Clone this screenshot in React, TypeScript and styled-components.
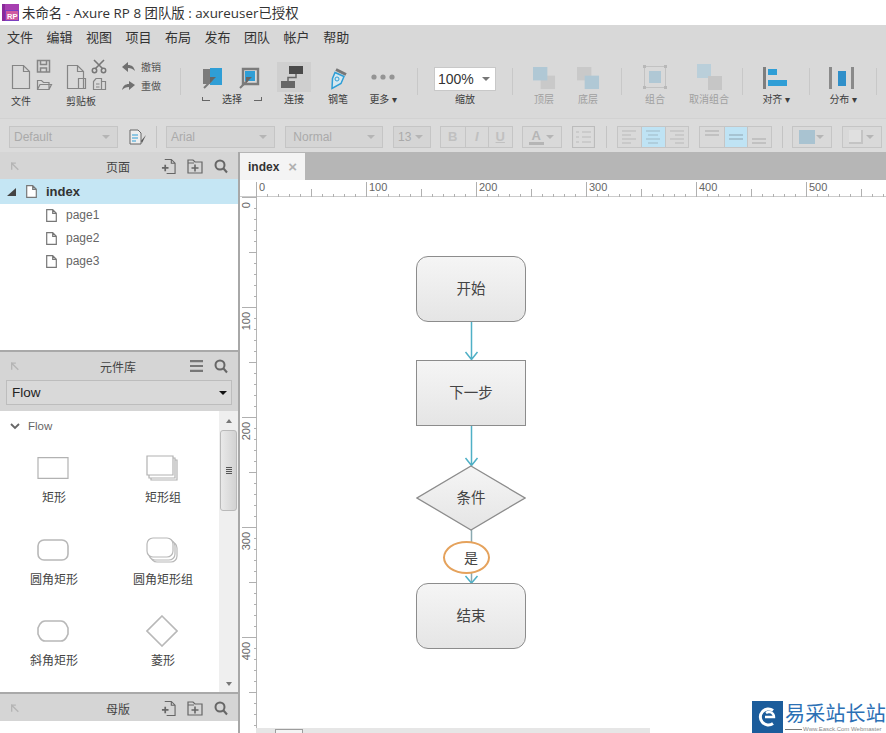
import React from "react";
import styled, { createGlobalStyle } from "styled-components";

const CJK = `"Noto Sans CJK SC", sans-serif`;
const UI = `"Open Sans", "Noto Sans CJK SC", sans-serif`;
const ARIAL = `"Liberation Sans", "Noto Sans CJK SC", sans-serif`;

const Global = createGlobalStyle`
  html, body { margin: 0; padding: 0; background: #fff; overflow: hidden; }
  #root { width: 886px; height: 733px; overflow: hidden; position: relative; }
  * { box-sizing: border-box; }
`;

const Page = styled.div`
  width: 886px; height: 733px; display: flex; flex-direction: column; font-family: ${ARIAL}; position: relative; overflow: hidden;
`;
const TitleBar = styled.div`
  height: 25px; flex: none; display: flex; align-items: center; gap: 3px; padding: 0 0 1px 2px; background: #fff;
`;
const TitleText = styled.span`
  font: 13.4px ${UI}; color: #333; white-space: nowrap;
`;
const MenuBar = styled.div`
  height: 25px; flex: none; display: flex; align-items: center; gap: 13.5px; padding: 0 0 2px 7px; background: #d8d8d8;
`;
const MenuItem = styled.span`
  font: 13px ${CJK}; color: #333; white-space: nowrap;
`;
const Toolbar = styled.div`
  height: 68px; flex: none; display: flex; background: #d9d9d9; overflow: hidden;
`;
const Tool = styled.div<{ $w: number; $left?: number; $ml?: number; $dim?: boolean; $start?: boolean }>`
  width: ${p => p.$w}px; flex: none; margin-left: ${p => p.$ml || 0}px; padding-left: ${p => p.$left || 0}px;
  display: flex; flex-direction: column; align-items: ${p => (p.$start ? "flex-start" : "center")};
  color: ${p => (p.$dim ? "#a0a0a0" : "#3d3d3d")};
`;
const ToolIcon = styled.div<{ $top?: number }>`
  height: 42px; display: flex; align-items: flex-start; justify-content: center;
  svg { display: block; margin-top: ${p => p.$top ?? 17}px; overflow: visible; }
`;
const SelectPair = styled(ToolIcon)`
  padding-left: 2px; gap: 17px;
`;
const HoverBox = styled.div`
  width: 34px; height: 30px; margin-top: 12px; background: #cfcfcf; display: flex; align-items: center; justify-content: center;
`;
const ToolLabel = styled.span`
  font: 10px/14px ${CJK}; white-space: nowrap; margin-top: 0;
`;
const LowLabel = styled(ToolLabel)`
  margin-top: 2px;
`;
const UndoStack = styled.div`
  width: 64px; flex: none; padding: 10px 0 0 6px; display: flex; flex-direction: column; gap: 6px;
`;
const UndoRow = styled.div`
  display: flex; align-items: center; gap: 6px; height: 13px; font: 10px ${CJK}; color: #555; white-space: nowrap;
`;
const ToolSep = styled.div<{ $ml?: number }>`
  width: 1px; height: 27px; flex: none; margin: 18px 0 0 ${p => p.$ml || 0}px; background: #c8c8c8;
`;
const SelectLabel = styled.div`
  width: 60px; margin-left: 1px; display: flex; justify-content: space-between; align-items: center;
  font: 10px/14px ${CJK}; color: #3d3d3d;
`;
const Corner = styled.span<{ $right?: boolean }>`
  width: 8px; height: 4px; border-bottom: 1px solid #666;
  border-left: ${p => (p.$right ? "none" : "1px solid #666")};
  border-right: ${p => (p.$right ? "1px solid #666" : "none")};
`;
const ZoomBox = styled.div`
  width: 62px; height: 24px; margin-top: 17px; margin-bottom: 1px; background: #fff; border: 1px solid #c8c8c8;
  display: flex; align-items: center; justify-content: space-between; padding: 0 5px 0 3px;
  font: 14px ${ARIAL}; color: #333;
`;
const Caret = styled.i<{ $c?: string; $s?: number }>`
  display: block; width: 0; height: 0; flex: none;
  border-left: ${p => p.$s || 4}px solid transparent; border-right: ${p => p.$s || 4}px solid transparent;
  border-top: ${p => p.$s || 4}px solid ${p => p.$c || "#777"};
`;
const FormatBar = styled.div`
  height: 34px; flex: none; display: flex; align-items: center; padding: 2px 0 0 9px; background: #dbdbdb;
  border-top: 1px solid #d2d2d2;
`;
const FSelect = styled.div<{ $w: number; $ml?: number }>`
  width: ${p => p.$w}px; height: 22px; flex: none; margin-left: ${p => p.$ml || 0}px; background: #d5d5d5; border: 1px solid #c5c5c5;
  display: flex; align-items: center; justify-content: space-between; padding: 0 7px 0 4px;
  font: 12px ${ARIAL}; color: #aaa;
`;
const FSep = styled.div<{ $ml: number }>`
  width: 1px; height: 22px; flex: none; margin-left: ${p => p.$ml}px; background: #c4c4c4;
`;
const FIcon = styled.div<{ $ml: number }>`
  margin-left: ${p => p.$ml}px; display: flex; flex: none;
`;
const BtnGroup = styled.div<{ $ml: number }>`
  margin-left: ${p => p.$ml}px; display: flex; flex: none; height: 22px; border: 1px solid #c5c5c5;
`;
const GroupBtn = styled.div<{ $on?: boolean }>`
  width: 23.5px; display: flex; align-items: center; justify-content: center; background: ${p => (p.$on ? "#bfe3f4" : "#d9d9d9")};
  border-left: 1px solid #c5c5c5; font: bold 13px ${ARIAL}; color: #c0c0c0;
  &:first-child { border-left: none; }
`;
const DropBtn = styled.div<{ $w: number; $ml: number }>`
  width: ${p => p.$w}px; height: 22px; margin-left: ${p => p.$ml}px; flex: none; border: 1px solid #c5c5c5; background: #d9d9d9;
  display: flex; align-items: center; justify-content: space-between; padding: 0 7px 0 6px;
`;
const GroupBtnText = styled.span`
  font: bold 13px ${ARIAL}; color: #b5b5b5; border-bottom: 3px solid #b5b5b5; line-height: 13px; padding: 0 3px;
`;
const FillSwatch = styled.span`
  width: 16px; height: 14px; background: #a9c3d1;
`;
const ShadowSwatch = styled.span`
  width: 14px; height: 14px; background: #e0e0e0; border-right: 2px solid #c4c4c4; border-bottom: 2px solid #c4c4c4;
`;
const Main = styled.div`
  flex: 1; min-height: 0; display: flex;
`;
const Side = styled.aside`
  width: 240px; flex: none; display: flex; flex-direction: column; border-right: 2px solid #a8a8a8; background: #fff;
`;
const PanelBar = styled.div`
  height: 27px; flex: none; width: 100%; display: flex; align-items: center; padding: 1px 10px 0 10px; background: #d5d5d5;
`;
const PanelTitle = styled.span`
  font: 12px ${CJK}; color: #444; margin-left: 80px; width: 36px; text-align: center; white-space: nowrap;
`;
const HeadIcons = styled.div`
  margin-left: auto; display: flex; align-items: center; gap: 11px;
`;
const PageArea = styled.div`
  height: 171px; flex: none;
`;
const PageRow = styled.div<{ $active?: boolean }>`
  height: ${p => (p.$active ? 25 : 23)}px; display: flex; align-items: center; gap: 9px;
  padding-left: ${p => (p.$active ? 7 : 46)}px; padding-bottom: ${p => (p.$active ? 0 : 1)}px;
  background: ${p => (p.$active ? "#c5e6f4" : "transparent")};
  font: ${p => (p.$active ? "bold 13px" : "12px")} ${ARIAL}; color: ${p => (p.$active ? "#333" : "#666")};
`;
const Divider = styled.div`
  height: 2px; flex: none; background: #a9a9a9;
`;
const LibHead = styled.div`
  height: 59px; flex: none; background: #d5d5d5;
`;
const LibSelect = styled.div`
  height: 25px; margin: 1px 6px 0; background: #d9d9d9; border: 1px solid #bdbdbd; display: flex; align-items: center; justify-content: space-between;
  padding: 0 4px 0 5px; font: 13.5px ${ARIAL}; color: #222;
`;
const LibBody = styled.div`
  height: 281px; flex: none; display: flex;
`;
const LibList = styled.div`
  flex: 1; padding: 7px 0 0 0; min-width: 0;
`;
const FlowHead = styled.div`
  display: flex; align-items: center; gap: 8px; padding-left: 10px; height: 16px; font: 11.5px ${ARIAL}; color: #666;
`;
const WidgetGrid = styled.div`
  display: grid; grid-template-columns: 108px 110px; grid-auto-rows: 81.5px; margin-top: 22px;
`;
const Widget = styled.div`
  display: flex; flex-direction: column; align-items: center;
`;
const WidgetIcon = styled.div`
  height: 24px; margin-right: 3px; display: flex; justify-content: center; align-items: center;
`;
const WidgetLabel = styled.span`
  margin-top: 10px; font: 12px/14px ${CJK}; color: #444; white-space: nowrap;
`;
const Scroll = styled.div`
  width: 19px; flex: none; background: #efefef; display: flex; flex-direction: column; align-items: center; padding-top: 8px;
`;
const ScrollUp = styled.i`
  width: 0; height: 0; border-left: 3.5px solid transparent; border-right: 3.5px solid transparent; border-bottom: 4px solid #777;
`;
const Thumb = styled.div`
  width: 17px; height: 81px; margin-top: 7px; border: 1px solid #b9b9b9; border-radius: 3px;
  background: linear-gradient(90deg, #e9e9e9, #d2d2d2); display: flex; flex-direction: column; align-items: center; justify-content: center; gap: 1px;
`;
const Grip = styled.i`
  width: 6px; height: 1px; background: #555;
`;
const ScrollDown = styled.i`
  width: 0; height: 0; margin-top: auto; margin-bottom: 6px; border-left: 3.5px solid transparent; border-right: 3.5px solid transparent; border-top: 4px solid #777;
`;
const Work = styled.section`
  flex: 1; min-width: 0; display: flex; flex-direction: column; background: #fff; position: relative;
`;
const TabStrip = styled.div`
  height: 28px; flex: none; background: #b6b6b6; display: flex; align-items: flex-end; padding-top: 1px;
`;
const Tab = styled.div`
  width: 65px; height: 27px; background: #f4f4f4; display: flex; align-items: center; padding-left: 8px; gap: 9px;
  font: bold 12px ${ARIAL}; color: #333;
`;
const TabClose = styled.span`
  font: bold 15px ${ARIAL}; color: #b0b0b0;
`;
const RulerRow = styled.div`
  height: 17px; flex: none; display: flex;
  svg { display: block; }
`;
const RulerBody = styled.div`
  flex: 1; min-height: 0; display: flex;
`;
const RulerV = styled.div`
  width: 17px; flex: none; overflow: hidden;
  svg { display: block; }
`;
const Canvas = styled.div`
  flex: 1; position: relative; background: #fff;
`;
const Node = styled.div<{ $x: number; $y: number; $r?: number }>`
  position: absolute; left: ${p => p.$x}px; top: ${p => p.$y}px; width: 110px; height: 66px; padding-bottom: 3px;
  border: 1px solid #8c8c8c; border-radius: ${p => p.$r || 0}px;
  background: linear-gradient(180deg, #f5f5f5, #e5e5e5);
  display: flex; align-items: center; justify-content: center;
  font: 14.5px ${CJK}; color: #444;
`;
const Diamond = styled.div`
  position: absolute; left: 159px; top: 268px; width: 110px; height: 66px; padding-bottom: 3px;
  display: flex; align-items: center; justify-content: center; font: 14.5px ${CJK}; color: #444;
  svg { position: absolute; inset: 0; }
  span { position: relative; }
`;
const Oval = styled.div`
  position: absolute; left: 186px; top: 344px; width: 47px; height: 33px; border: 2px solid #e5a25c; border-radius: 50%;
  background: #fff; display: flex; align-items: center; justify-content: center; padding: 0 0 2px 9px; font: 14px ${CJK}; color: #444;
`;
const Wires = styled.svg`
  position: absolute; left: 0; top: 0; overflow: visible;
`;
const HScroll = styled.div`
  position: absolute; left: 16px; bottom: 0; width: 394px; height: 5px; background: #e6e6e6; padding-top: 1px;
`;
const HThumb = styled.div`
  width: 28px; height: 4px; margin-left: 19px; background: #f4f4f4; border: 1px solid #9d9d9d; border-bottom: none;
`;
const Watermark = styled.div`
  position: absolute; right: 0; bottom: 0; width: 146px; height: 43px; background: #fff; display: flex; align-items: flex-end; padding-left: 12px;
`;
const WmLogo = styled.div`
  width: 31px; height: 32px; background: #1b5c9b; display: flex; align-items: center; justify-content: center; flex: none;
`;
const WmText = styled.div`
  margin-left: 2px; width: 101px; height: 32px; display: flex; flex-direction: column; white-space: nowrap;
`;
const WmTitle = styled.span`
  font: 400 20px/24px ${CJK}; color: #2b70b5; letter-spacing: 0.2px;
`;
const WmSub = styled.div`
  display: flex; align-items: center; gap: 1px; font: 6px/8px ${ARIAL}; color: #888;
  &::before { content: ""; width: 17px; height: 1px; background: #777; flex: none; }
`;

const PageDoc = ({ c = "#777", fill = "none" }: { c?: string; fill?: string }) => (
  <svg width="11" height="13" viewBox="0 0 11 13" fill={fill} stroke={c} strokeWidth={1.2}>
    <path d="M.7.7h6l3.6 3.6v8H.7zM6.700.7v3.600h3.600" />
  </svg>
);
const FileIcon = () => (
  <svg width="42" height="34" viewBox="0 0 42 34" fill="none" stroke="#858585" strokeWidth={1.2}>
    <path d="M1.500 9.500h11l6 6v17h-17zM12.500 9.500v6h6" />
    <path d="M26.500 4.500h12v11.500h-12zM29.500 4.500v4h6v-4M29.500 16v-4h6v4" strokeWidth={1.5} />
    <path d="M26.500 24.500h4l2 2h5.500v7h-11.500zM26.500 33.500l2.500-5h11.500l-2.500 5" />
  </svg>
);
const ClipIcon = () => (
  <svg width="42" height="34" viewBox="0 0 42 34" fill="none" stroke="#858585" strokeWidth={1.2}>
    <path d="M1.500 9.500h10l6 6v17h-16zM11.500 9.500v6h6M12.500 22.500h7v10h-7z" />
    <path d="M28 4l9 9M38 4l-9 9" stroke="#777" strokeWidth={1.6} />
    <circle cx="28.500" cy="14.500" r="2.200" stroke="#777" strokeWidth={1.5} />
    <circle cx="37.500" cy="14.500" r="2.200" stroke="#777" strokeWidth={1.5} />
    <path d="M30 22.500h5.500v11h-8v-8z M35.500 25.500h4v8h-4M30 28h3.500M30 31h3.500" />
  </svg>
);
const UndoIcon = () => (
  <svg width="13" height="10" viewBox="0 0 13 10" fill="#707070"><path d="M0 5l6-5v3c4 0 6 2 7 6-2-2-4-3-7-3v4z" /></svg>
);
const RedoIcon = () => (
  <svg width="13" height="10" viewBox="0 0 13 10" fill="#707070"><path d="M13 4L7 0v3C3 3 1 5 0 9c2-2 4-3 7-3v3z" /></svg>
);
const SelectA = () => (
  <svg width="20" height="20" viewBox="0 0 20 20">
    <path d="M0 1h7v15H0z" fill="#7b7b7b" />
    <path d="M7 0h12v17H7z" fill="#2f9ed6" />
    <path d="M1 20l8-8" stroke="#7b7b7b" strokeWidth={2} />
    <path d="M7 9h6l-6 6z" fill="#666" />
  </svg>
);
const SelectB = () => (
  <svg width="20" height="20" viewBox="0 0 20 20" fill="none">
    <path d="M3 1h15v15H3z" stroke="#7b7b7b" strokeWidth={2.4} />
    <path d="M5 3h10v10H5z" fill="#2f9ed6" />
    <path d="M0 20l8-8" stroke="#7b7b7b" strokeWidth={2} />
    <path d="M6 9h6l-6 6z" fill="#666" />
  </svg>
);
const ConnectIcon = () => (
  <svg width="26" height="22" viewBox="0 0 26 22" fill="none">
    <path d="M8 0h14v8H8z" fill="#4a4a4a" />
    <path d="M0 15h14v7H0z" fill="#666" />
    <path d="M15 8v3.500H7V15" stroke="#666" strokeWidth={1.500} />
  </svg>
);
const PenIcon = () => (
  <svg width="18" height="21" viewBox="0 0 18 21" fill="none">
    <path d="M7 1.500l10 5" stroke="#777" strokeWidth={3} />
    <path d="M6 4.500l9 4-3 7-9 5 0.500-10z" stroke="#2f9ed6" strokeWidth={1.500} fill="#d5e8f0" />
    <circle cx="8" cy="11" r="2" stroke="#2f9ed6" />
  </svg>
);
const DotsIcon = () => (
  <svg width="24" height="26" viewBox="0 0 24 26" fill="#949494">
    <circle cx="3" cy="13" r="2.600" /><circle cx="12" cy="13" r="2.600" /><circle cx="21" cy="13" r="2.600" />
  </svg>
);
const FrontIcon = () => (
  <svg width="23" height="23" viewBox="0 0 24 24">
    <path d="M8 9h15v14H8z" fill="#c9c9c9" />
    <path d="M0 0h15v14H0z" fill="#b0c8d5" />
  </svg>
);
const BackIcon = () => (
  <svg width="23" height="23" viewBox="0 0 24 24">
    <path d="M0 0h15v14H0z" fill="#c9c9c9" />
    <path d="M8 9h15v14H8z" fill="#b0c8d5" />
  </svg>
);
const GroupIcon = () => (
  <svg width="24" height="24" viewBox="0 0 24 24" fill="none">
    <path d="M1.500 1.500h21v21h-21z" stroke="#c2c2c2" />
    <path d="M6 6h12v12H6z" fill="#b0c8d5" />
    <path d="M0 0h3v3H0zM21 0h3v3h-3zM0 21h3v3H0zM21 21h3v3h-3z" fill="#b8b8b8" />
  </svg>
);
const UngroupIcon = () => (
  <svg width="26" height="26" viewBox="0 0 26 26">
    <path d="M1 0h14v14H1z" fill="#bacfda" />
    <path d="M12 12h14v14H12z" fill="#c6c6c6" />
  </svg>
);
const AlignIcon = () => (
  <svg width="26" height="22" viewBox="0 0 26 22">
    <path d="M0 0h3v22H0z" fill="#7e7e7e" />
    <path d="M5 2h9v6H5zM5 13h19v6H5z" fill="#2f9ed6" />
  </svg>
);
const DistIcon = () => (
  <svg width="28" height="22" viewBox="0 0 28 22">
    <path d="M0 0h3v22H0zM22 0h3v22h-3z" fill="#8a8a8a" />
    <path d="M9 4h8v15H9z" fill="#2f8fc9" />
  </svg>
);
const StyleIcon = () => (
  <svg width="18" height="16" viewBox="0 0 18 16" fill="none">
    <path d="M1 1h8l3 3v11H1z" stroke="#666" fill="#eee" />
    <path d="M3 6h6M3 9h6M3 12h4" stroke="#2f9ed6" />
    <path d="M17 6l-4 8-1-2z" fill="#555" />
  </svg>
);
const Lines = ({ kind }: { kind: "l" | "c" | "r" }) => {
  const d = kind === "l" ? "M4 3h14M4 7h9M4 11h14M4 15h9" : kind === "c" ? "M4 3h14M6 7h10M4 11h14M6 15h10" : "M4 3h14M9 7h9M4 11h14M9 15h9";
  return <svg width="22" height="18" viewBox="0 0 22 18" fill="none" stroke={kind === "c" ? "#9fb9c6" : "#b9b9b9"} strokeWidth={1.200}><path d={d} /></svg>;
};
const VLines = ({ kind }: { kind: "t" | "m" | "b" }) => {
  const y = kind === "t" ? 3 : kind === "m" ? 7 : 11;
  return <svg width="22" height="18" viewBox="0 0 22 18" fill="none" stroke={kind === "m" ? "#9fb9c6" : "#b9b9b9"} strokeWidth={1.400}><path d={`M4 ${y}h14M4 ${y + 4}h14`} /></svg>;
};
const ListIcon = () => (
  <svg width="23" height="22" viewBox="0 0 23 22" fill="none" stroke="#bcbcbc" strokeWidth={1.200}>
    <path d="M.5.5h22v21H.5zM4 6h3M10 6h9M4 11h3M10 11h9M4 16h3M10 16h9" />
  </svg>
);
const PinIcon = () => (
  <svg width="10" height="11" viewBox="0 0 12 12" fill="none" stroke="#b5b5b5" strokeWidth={1.600}>
    <path d="M2 1v9M2 2h5M2 2l8 8" />
  </svg>
);
const AddPage = () => (
  <svg width="15" height="17" viewBox="0 0 16 17" fill="none" stroke="#666" strokeWidth={1.200}>
    <path d="M4 1h7l4 4v11H6M11 1v4h4" />
    <path d="M1 10h7M4.500 6.500v7" strokeWidth={1.800} />
  </svg>
);
const AddFolder = () => (
  <svg width="16" height="15" viewBox="0 0 16 15" fill="none" stroke="#666" strokeWidth={1.200}>
    <path d="M1 1h5l2 2h7v11H1zM1 4h6" />
    <path d="M4.500 9h7M8 5.500v7" strokeWidth={1.600} />
  </svg>
);
const SearchIcon = () => (
  <svg width="14" height="15" viewBox="0 0 14 15" fill="none" stroke="#666" strokeWidth={2}>
    <circle cx="6" cy="6" r="4.500" /><path d="M9.500 9.500l3.500 4" />
  </svg>
);
const MenuIcon = () => (
  <svg width="13" height="12" viewBox="0 0 13 12" fill="#777"><path d="M0 0h13v2.200H0zM0 4.900h13v2.200H0zM0 9.800h13V12H0z" /></svg>
);
const Logo = () => (
  <svg width="17" height="17" viewBox="0 0 17 17">
    <path d="M0 0h3v17H0z" fill="#8a2a9a" />
    <path d="M3 0h14v17H3z" fill="#7a3fc0" />
    <path d="M3 0h14v6H3z" fill="#a73fb0" />
    <path d="M4 7h12v9H4z" fill="#d05aa0" />
    <text x="5" y="15" fontSize="7.500" fontWeight="bold" fill="#fff" fontFamily="Liberation Sans">RP</text>
  </svg>
);
const Header = ({ title, icons }: { title: string; icons: React.ReactNode }) => (
  <PanelBar>
    <PinIcon />
    <PanelTitle>{title}</PanelTitle>
    <HeadIcons>{icons}</HeadIcons>
  </PanelBar>
);

const rulerTicks = (len: number, offset: number) => {
  const out: { p: number; s: number; n?: number }[] = [];
  for (let i = 0; i * 11 + offset <= len; i++) {
    const p = i * 11 + offset;
    out.push({ p, s: i % 10 === 0 ? 15 : i % 5 === 0 ? 8 : 3, n: i % 10 === 0 ? i * 10 : undefined });
  }
  return out;
};

const RectW = () => <svg width="32" height="22" viewBox="0 0 32 22" fill="#fff" stroke="#b2b2b2" strokeWidth={1.200}><path d="M1 .700h30v20.600H1z" /></svg>;
const RectG = () => <svg width="32" height="26" viewBox="0 0 32 26" fill="#fff" stroke="#b2b2b2" strokeWidth={1.200}><path d="M5 5h26v20H5z" /><path d="M3 3h26v20H3z" /><path d="M1 1h26v19H1z" /></svg>;
const RoundW = () => <svg width="32" height="22" viewBox="0 0 32 22" fill="#fff" stroke="#b8b8b8" strokeWidth={1.600}><rect x="1" y="1" width="30" height="20" rx="6" /></svg>;
const RoundG = () => <svg width="32" height="26" viewBox="0 0 32 26" fill="#fff" stroke="#b8b8b8" strokeWidth={1.200}><rect x="5" y="5" width="26" height="20" rx="6" /><rect x="3" y="3" width="26" height="20" rx="6" /><rect x="1" y="1" width="26" height="19" rx="6" /></svg>;
const ChamW = () => <svg width="32" height="22" viewBox="0 0 32 22" fill="#fff" stroke="#b8b8b8" strokeWidth={1.600}><path d="M8 1h16q3 0 5 3l2 4v6l-2 4q-2 3-5 3H8q-3 0-5-3l-2-4V8l2-4q2-3 5-3z" /></svg>;
const DiaW = () => <svg width="32" height="32" viewBox="0 0 32 32" fill="#fff" stroke="#b8b8b8" strokeWidth={1.600}><path d="M16 1l15 15-15 15L1 16z" /></svg>;

const widgets: [string, React.ReactNode][] = [
  ["矩形", <RectW />], ["矩形组", <RectG />], ["圆角矩形", <RoundW />], ["圆角矩形组", <RoundG />], ["斜角矩形", <ChamW />], ["菱形", <DiaW />],
];
const menus = ["文件", "编辑", "视图", "项目", "布局", "发布", "团队", "帐户", "帮助"];

export default function App() {
  return (
    <Page>
      <Global />
      <TitleBar>
        <Logo />
        <TitleText>未命名 - Axure RP 8 团队版 : axureuser已授权</TitleText>
      </TitleBar>
      <MenuBar>{menus.map(m => <MenuItem key={m}>{m}</MenuItem>)}</MenuBar>
      <Toolbar>
        <Tool $w={64} $left={11} $start>
          <ToolIcon $top={6}><FileIcon /></ToolIcon>
          <LowLabel>文件</LowLabel>
        </Tool>
        <Tool $w={52} $left={2} $start>
          <ToolIcon $top={6}><ClipIcon /></ToolIcon>
          <LowLabel>剪贴板</LowLabel>
        </Tool>
        <UndoStack>
          <UndoRow><UndoIcon />撤销</UndoRow>
          <UndoRow><RedoIcon />重做</UndoRow>
        </UndoStack>
        <ToolSep />
        <Tool $w={96} $left={20} $start>
          <SelectPair $top={18}>
            <SelectA />
            <SelectB />
          </SelectPair>
          <SelectLabel><Corner />选择<Corner $right /></SelectLabel>
        </Tool>
        <Tool $w={34}>
          <HoverBox><ConnectIcon /></HoverBox>
          <ToolLabel>连接</ToolLabel>
        </Tool>
        <Tool $w={54}>
          <ToolIcon $top={18}><PenIcon /></ToolIcon>
          <ToolLabel>钢笔</ToolLabel>
        </Tool>
        <Tool $w={36}>
          <ToolIcon $top={14}><DotsIcon /></ToolIcon>
          <ToolLabel>更多 ▾</ToolLabel>
        </Tool>
        <ToolSep $ml={16} />
        <Tool $w={94}>
          <ZoomBox>100%<Caret /></ZoomBox>
          <ToolLabel>缩放</ToolLabel>
        </Tool>
        <ToolSep />
        <Tool $w={44} $ml={9} $dim>
          <ToolIcon><FrontIcon /></ToolIcon>
          <ToolLabel>顶层</ToolLabel>
        </Tool>
        <Tool $w={44} $dim>
          <ToolIcon><BackIcon /></ToolIcon>
          <ToolLabel>底层</ToolLabel>
        </Tool>
        <ToolSep $ml={11} />
        <Tool $w={66} $dim>
          <ToolIcon $top={15}><GroupIcon /></ToolIcon>
          <ToolLabel>组合</ToolLabel>
        </Tool>
        <Tool $w={42} $dim>
          <ToolIcon $top={14}><UngroupIcon /></ToolIcon>
          <ToolLabel>取消组合</ToolLabel>
        </Tool>
        <ToolSep $ml={12} />
        <Tool $w={66}>
          <ToolIcon><AlignIcon /></ToolIcon>
          <ToolLabel>对齐 ▾</ToolLabel>
        </Tool>
        <ToolSep />
        <Tool $w={66}>
          <ToolIcon><DistIcon /></ToolIcon>
          <ToolLabel>分布 ▾</ToolLabel>
        </Tool>
        <ToolSep />
      </Toolbar>
      <FormatBar>
        <FSelect $w={109}>Default<Caret $c="#b5b5b5" /></FSelect>
        <FIcon $ml={11}><StyleIcon /></FIcon>
        <FSep $ml={9} />
        <FSelect $w={109} $ml={9}>Arial<Caret $c="#b5b5b5" /></FSelect>
        <FSelect $w={98} $ml={10}>&nbsp;Normal<Caret $c="#b5b5b5" /></FSelect>
        <FSelect $w={38} $ml={10}>13<Caret $c="#b5b5b5" /></FSelect>
        <BtnGroup $ml={9}>
          <GroupBtn>B</GroupBtn><GroupBtn><em>I</em></GroupBtn><GroupBtn><u>U</u></GroupBtn>
        </BtnGroup>
        <DropBtn $w={40} $ml={9}><GroupBtnText>A</GroupBtnText><Caret $c="#b5b5b5" /></DropBtn>
        <FIcon $ml={10}><ListIcon /></FIcon>
        <FSep $ml={11} />
        <BtnGroup $ml={10}>
          <GroupBtn><Lines kind="l" /></GroupBtn><GroupBtn $on><Lines kind="c" /></GroupBtn><GroupBtn><Lines kind="r" /></GroupBtn>
        </BtnGroup>
        <BtnGroup $ml={10}>
          <GroupBtn><VLines kind="t" /></GroupBtn><GroupBtn $on><VLines kind="m" /></GroupBtn><GroupBtn><VLines kind="b" /></GroupBtn>
        </BtnGroup>
        <FSep $ml={10} />
        <DropBtn $w={40} $ml={9}><FillSwatch /><Caret $c="#b5b5b5" /></DropBtn>
        <DropBtn $w={40} $ml={10}><ShadowSwatch /><Caret $c="#b5b5b5" /></DropBtn>
      </FormatBar>
      <Main>
        <Side>
          <Header title="页面" icons={<><AddPage /><AddFolder /><SearchIcon /></>} />
          <PageArea>
            <PageRow $active>
              <svg width="10" height="10" viewBox="0 0 10 10" fill="#444"><path d="M0 9L9 1v8z" /></svg>
              <PageDoc fill="#fff" />
              <span>index</span>
            </PageRow>
            {["page1", "page2", "page3"].map(p => (
              <PageRow key={p}><PageDoc /><span>{p}</span></PageRow>
            ))}
          </PageArea>
          <Divider />
          <LibHead>
            <Header title="元件库" icons={<><MenuIcon /><SearchIcon /></>} />
            <LibSelect>Flow<Caret $c="#111" /></LibSelect>
          </LibHead>
          <LibBody>
            <LibList>
              <FlowHead>
                <svg width="10" height="7" viewBox="0 0 10 7" fill="none" stroke="#666" strokeWidth={1.800}><path d="M1 1l4 4 4-4" /></svg>
                Flow
              </FlowHead>
              <WidgetGrid>
                {widgets.map(([label, icon]) => (
                  <Widget key={label}>
                    <WidgetIcon>{icon}</WidgetIcon>
                    <WidgetLabel>{label}</WidgetLabel>
                  </Widget>
                ))}
              </WidgetGrid>
            </LibList>
            <Scroll>
              <ScrollUp />
              <Thumb><Grip /><Grip /><Grip /><Grip /></Thumb>
              <ScrollDown />
            </Scroll>
          </LibBody>
          <Divider />
          <Header title="母版" icons={<><AddPage /><AddFolder /><SearchIcon /></>} />
        </Side>
        <Work>
          <TabStrip>
            <Tab>index<TabClose>×</TabClose></Tab>
          </TabStrip>
          <RulerRow>
            <svg width="646" height="17" viewBox="0 0 646 17" fontFamily="Liberation Sans" fontSize="11" fill="#666">
              <path d="M0 16.500h646" stroke="#cccccc" />
              {rulerTicks(646, 16).map(t => (
                <g key={t.p}>
                  <path d={`M${t.p + 0.5} 17v-${t.s}`} stroke="#b0b0b0" />
                  {t.n !== undefined && <text x={t.p + 3} y={11}>{t.n}</text>}
                </g>
              ))}
            </svg>
          </RulerRow>
          <RulerBody>
            <RulerV>
              <svg width="17" height="536" viewBox="0 0 17 536" fontFamily="Liberation Sans" fontSize="11" fill="#666">
                <path d="M16.500 0v536" stroke="#b5b5b5" />
                {rulerTicks(536, 0).map(t => (
                  <g key={t.p}>
                    <path d={`M17 ${t.p + 0.5}h-${t.s}`} stroke="#b0b0b0" />
                    {t.n !== undefined && <text transform={`translate(10 ${t.p + 5}) rotate(-90)`} textAnchor="end">{t.n}</text>}
                  </g>
                ))}
              </svg>
            </RulerV>
            <Canvas>
              <Wires width="1" height="1">
                <g fill="none" stroke="#4fb0c6" strokeWidth={1.500}>
                  <path d="M214.500 124v39M208.500 155l6 7.500 6-7.500" />
                  <path d="M214.500 228v41M208.500 261l6 7.500 6-7.500" />
                  <path d="M214.500 333v53" stroke="#8aa9b0" />
                  <path d="M208.500 379l6 7 6-7" />
                </g>
              </Wires>
              <Node $x={159} $y={59} $r={12}>开始</Node>
              <Node $x={159} $y={163}>下一步</Node>
              <Diamond>
                <svg width="110" height="66" viewBox="0 0 110 66"><defs><linearGradient id="dg" x1="0" y1="0" x2="0" y2="1"><stop offset="0" stopColor="#f5f5f5" /><stop offset="1" stopColor="#e5e5e5" /></linearGradient></defs><path d="M55 1l54 32-54 32L1 33z" fill="url(#dg)" stroke="#8c8c8c" strokeWidth={1.300} /></svg>
                <span>条件</span>
              </Diamond>
              <Oval>是</Oval>
              <Node $x={159} $y={386} $r={12}>结束</Node>
            </Canvas>
          </RulerBody>
          <HScroll><HThumb /></HScroll>
        </Work>
      </Main>
      <Watermark>
        <WmLogo>
          <svg width="22" height="22" viewBox="0 0 22 22" fill="none" stroke="#fff" strokeWidth={3}>
            <path d="M16 4.500A8 8 0 1 0 16 17.500" />
            <path d="M8 11h9a5 5 0 0 0-8-4" strokeWidth={2.400} />
          </svg>
        </WmLogo>
        <WmText>
          <WmTitle>易采站长站</WmTitle>
          <WmSub>Www.Easck.Com Webmaster</WmSub>
        </WmText>
      </Watermark>
    </Page>
  );
}
